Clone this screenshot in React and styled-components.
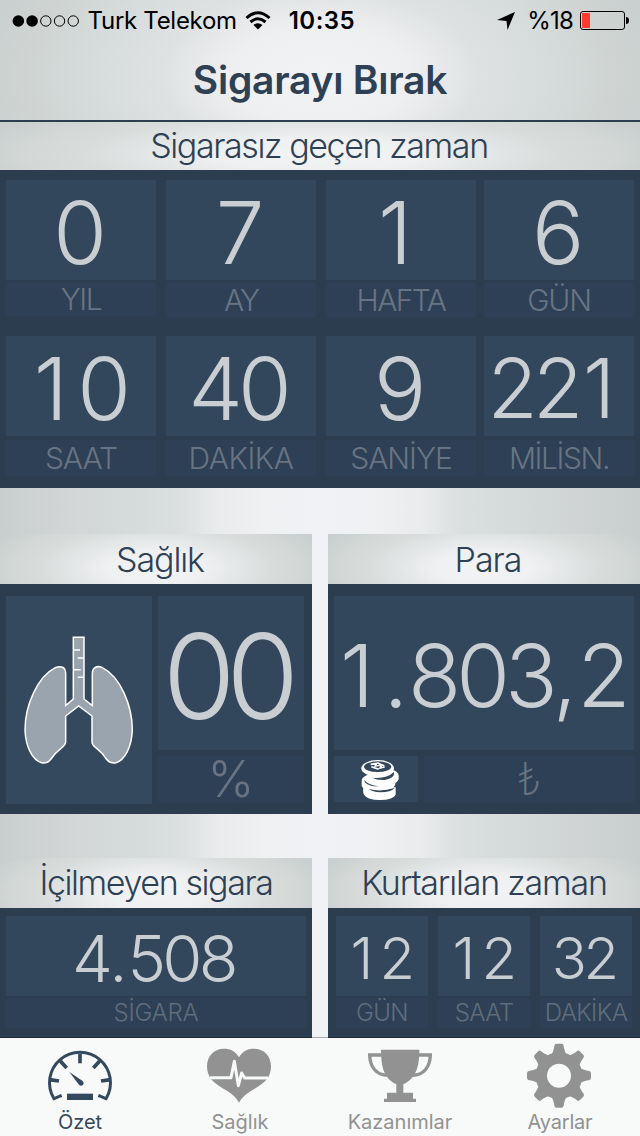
import React from "react";
import styled, { createGlobalStyle, css } from "styled-components";

const GlobalStyle = createGlobalStyle`
  * {
    box-sizing: border-box;
  }
  body {
    margin: 0;
    font-family: Inter, "Liberation Sans", sans-serif;
  }
`;

const silver = css`
  background: radial-gradient(
    ellipse 56% 125% at 50% 68%,
    #f2f3f5 0%,
    #eff0f1 28%,
    #e3e6e6 48%,
    #d8dddc 66%,
    #d3d8d7 82%,
    #c9cfce 100%
  );
`;

const Screen = styled.div`
  width: 640px;
  height: 1136px;
  display: flex;
  flex-direction: column;
  overflow: hidden;
  background: linear-gradient(
    90deg,
    #c9cfce 0%,
    #cfd3d3 7%,
    #d3d7d7 13%,
    #d6dcdb 22%,
    #dbdfdf 28%,
    #e9ebec 34%,
    #eff0f2 41%,
    #f1f2f5 50%,
    #eff0f2 59%,
    #e9ebec 66%,
    #dbdfdf 72%,
    #d6dcdb 78%,
    #cfd3d3 91%,
    #c9cfce 100%
  );
`;
const Header = styled.header`
  height: 122px;
  border-bottom: 2px solid #2c3e50;
  background: radial-gradient(
    ellipse 350px 190px at 50% 76px,
    #f2f3f5 0%,
    #eeeff1 26%,
    #dfe2e3 45%,
    #d6dbdb 65%,
    #cfd4d3 84%,
    #c9cfce 100%
  );
`;
const StatusBar = styled.div`
  height: 41px;
  display: flex;
  align-items: center;
  padding: 0 10px 0 12px;
  color: #000;
`;
const StatusText = styled.span`
  font-size: 24px;
  line-height: 41px;
  font-weight: ${(p) => p.$weight || 400};
  letter-spacing: ${(p) => p.$track}px;
  margin-left: ${(p) => p.$gap}px;
  white-space: nowrap;
`;
const Title = styled.h1`
  margin: 0;
  font-size: 39px;
  font-weight: 560;
  line-height: 77px;
  letter-spacing: -0.25px;
  text-align: center;
  color: #2e4054;
`;
const Heading = styled.h2`
  ${silver}
  margin: 0;
  height: ${(p) => p.$height || 50}px;
  padding: ${(p) => p.$pad || 0};
  font-size: 34px;
  font-weight: 300;
  line-height: ${(p) => p.$height || 50}px;
  letter-spacing: ${(p) => p.$track}px;
  text-align: center;
  white-space: nowrap;
  color: #2e4054;
`;
const TimePanel = styled.section`
  height: 318px;
  padding: 10px 6px 12px;
  display: grid;
  grid-template-columns: 150px 150px 150px 150px;
  column-gap: 10px;
  grid-template-rows: 156px 140px;
  background: #2c3d50;
  & > :nth-child(4n) {
    margin-left: -2px;
    margin-right: 2px;
  }
`;
const Unit = styled.div`
  display: flex;
  flex-direction: column;
`;
const FigureBox = styled.div`
  height: ${(p) => p.$height}px;
  padding-top: ${(p) => p.$drop || 5}px;
  text-align: center;
  background: #32475b;
  color: #c9ced3;
  line-height: ${(p) => p.$height - (p.$drop || 5)}px;
`;
const FigureText = styled.span`
  margin-right: 0.08em;
  font-size: ${(p) => p.$size}px;
  font-weight: 280;
  letter-spacing: ${(p) => p.$track || -0.058}em;
  white-space: nowrap;
`;
// the numeral one is much narrower than the other digits, so it gets side room
const One = styled.span`
  margin-left: 0.052em;
  margin-right: 0.165em;
`;
const Sep = styled.span`
  letter-spacing: 0;
`;
const Caption = styled.div`
  height: ${(p) => p.$height || 36}px;
  margin-top: ${(p) => p.$gap}px;
  background: #2e4055;
  color: ${(p) => (p.$dim ? "#5f6d7c" : "#687483")};
  font-size: ${(p) => p.$size || 30}px;
  font-weight: ${(p) => p.$weight || 300};
  line-height: ${(p) => p.$height || 36}px;
  letter-spacing: ${(p) => p.$track || 0}px;
  text-align: center;
  white-space: nowrap;
`;
const Cards = styled.div`
  display: grid;
  grid-template-columns: 312px 312px;
  column-gap: 16px;
  margin-top: ${(p) => p.$top}px;
`;
const CardBody = styled.div`
  height: ${(p) => p.$height}px;
  padding: ${(p) => p.$pad};
  display: flex;
  gap: ${(p) => p.$gap || 0}px;
  flex-direction: ${(p) => (p.$column ? "column" : "row")};
  background: #2c3d50;
  & > div {
    flex: none;
  }
`;
const LungTile = styled.div`
  width: 146px;
  height: 208px;
  padding: 29px 0 0 9px;
  background: #34495e;
`;
const Column = styled.div`
  width: ${(p) => p.$width}px;
`;
const MoneyRow = styled.div`
  display: grid;
  grid-template-columns: 84px 210px;
  column-gap: 6px;
`;
const CoinTile = styled.div`
  height: 46px;
  padding-left: 16px;
  background: #32475b;
  svg {
    display: block;
    margin-top: -6px;
  }
`;
const TabBar = styled.nav`
  height: 99px;
  flex: none;
  margin-top: -1px;
  display: grid;
  grid-template-columns: repeat(4, 160px);
  border-top: 1px solid rgba(0, 0, 0, 0.3);
  background: #f8f9f9 padding-box;
  z-index: 1;
`;
const Tab = styled.a`
  display: flex;
  flex-direction: column;
  align-items: center;
  padding-top: 2px;
  color: ${(p) => (p.$active ? "#34495e" : "#929292")};
`;
const TabLabel = styled.span`
  font-size: 20px;
  line-height: 24px;
  letter-spacing: ${(p) => p.$track || 0}px;
`;
const TabIcon = styled.svg.attrs({ width: 80, height: 70 })`
  display: block;
`;
const StatusIcon = styled.svg`
  flex: none;
  margin-left: ${(p) => p.$gap}px;
`;

const Figure = ({ height, size, drop, track, children }) => (
  <FigureBox $height={height} $drop={drop}>
    <FigureText $size={size} $track={track}>
      {children.split(/([1.,])/).map((part, i) => {
        if (part === "1") return <One key={i}>1</One>;
        if (part === "." || part === ",") return <Sep key={i}>{part}</Sep>;
        return part;
      })}
    </FigureText>
  </FigureBox>
);

const Signal = () => (
  <svg width="70" height="14" viewBox="0 0 70 14">
    <circle cx="6.500" cy="7" r="5.900" />
    <circle cx="20.500" cy="7" r="5.900" />
    {[34.5, 48.5, 62.5].map((x) => (
      <circle key={x} cx={x} cy="7" r="5.300" fill="none" stroke="#000" />
    ))}
  </svg>
);

const Lungs = () => (
  <svg width="130" height="150" viewBox="0 0 390 450">
    <path
      d="M175 37H207V222L232 242V146C232 126 248 121 262 128C315 155 352 240 352 315C350 365 330 405 303 413C288 416 281 412 274 402C264 386 258 380 245 370C233 362 231 356 231 350V273L191 243L152 273V350C152 358 148 362 138 370C125 380 118 386 108 402C101 412 94 416 80 413C52 405 32 365 30 315C30 240 68 155 121 128C137 121 152 126 152 146V242L175 222Z"
      fill="#9aa4ae"
      stroke="#fff"
      strokeWidth="4.500"
    />
    <path
      d="M175 75H195M207 99H188M175 134H197M207 157H188"
      stroke="#fff"
      strokeWidth="4.500"
    />
  </svg>
);

const Coins = () => (
  <svg width="70" height="60" viewBox="0 0 210 180">
    <g fill="#fff">
      <path d="M40 112Q38 128 42 134Q52 150 90 150Q128 150 137 134V112Z" />
      <path d="M35 95Q34 82 50 76L136 88Q142 124 90 125Q42 124 35 108Z" />
      <path d="M50 76Q54 102 98 106Q140 106 146 88V76Q143 62 126 60Z" />
      <ellipse cx="83" cy="55" rx="49" ry="25" />
    </g>
    <g fill="#32475b">
      <path d="M56 117Q92 127 134 114Q122 127 92 127Q66 126 56 117Z" />
      <path d="M42 89Q52 104 88 109Q58 110 46 98Z" />
      <path d="M66 83Q108 88 132 66Q136 84 104 90Q82 91 66 83Z" />
      <ellipse cx="83" cy="50" rx="41" ry="16" />
    </g>
    <path
      d="M62 43L80 40L76 48L96 45L90 54L104 51M64 50L86 58M82 38L103 49"
      fill="none"
      stroke="#fff"
      strokeWidth="5"
    />
  </svg>
);

const GaugeIcon = () => (
  <TabIcon viewBox="0 0 240 210">
    <g fill="none" stroke="currentColor" strokeWidth="9">
      <path d="M65 166L42 176A91.500 91.500 0 1 1 198 176L175 166" />
      <path
        d="M120 41V70M61 63L80 84M179 63L160 84M28 119L57 123M212 119L183 123"
        strokeWidth="11"
      />
    </g>
    <path d="M81 161H159V180H81Z" fill="currentColor" />
    <path
      d="M88 96L128 123Q134 129 129 135Q122 140 117 134Z"
      fill="currentColor"
    />
  </TabIcon>
);

const HeartIcon = () => (
  <TabIcon viewBox="0 0 240 210">
    <path
      d="M117 52C107 33 91 26 72 26C40 26 21 50 21 79C21 111 39 127 63 142C91 158 108 170 117 188C126 170 143 158 171 142C196 127 213 111 213 79C213 50 194 26 162 26C143 26 127 33 117 52Z"
      fill="currentColor"
    />
    <path
      d="M30 113H93L103 64L115 137L125 99L134 114H204"
      fill="none"
      stroke="#f8f9f9"
      strokeWidth="9"
      strokeLinejoin="round"
    />
  </TabIcon>
);

const TrophyIcon = () => (
  <TabIcon viewBox="120 690 240 210">
    <path
      d="M183 719H298C298 772 288 804 250 823V848H279V866H288V876H192V866H201V848H229V823C192 804 183 772 183 719Z"
      fill="currentColor"
    />
    <path
      d="M186 735H149C150 770 168 796 204 796M295 735H331C330 770 312 796 277 796"
      fill="none"
      stroke="currentColor"
      strokeWidth="10"
    />
  </TabIcon>
);

const GearIcon = () => (
  <TabIcon viewBox="600 690 240 210">
    <g fill="currentColor">
      {[0, 45, 90, 135, 180, 225, 270, 315].map((angle) => (
        <path
          key={angle}
          transform={`rotate(${angle} 717 797)`}
          d="M692 740Q702 720 703 707Q704 701 710 701H724Q730 701 731 707Q732 720 742 740Z"
        />
      ))}
    </g>
    <circle
      cx="717"
      cy="797"
      r="53"
      fill="none"
      stroke="currentColor"
      strokeWidth="34"
    />
  </TabIcon>
);

const elapsed = [
  { value: "0", label: "YIL", track: -1.4, short: true },
  { value: "7", label: "AY", track: -2 },
  { value: "1", label: "HAFTA", track: -1.6 },
  { value: "6", label: "GÜN", track: -1.2 },
  { value: "10", label: "SAAT", track: -1.1 },
  { value: "40", label: "DAKİKA", track: -0.5 },
  { value: "9", label: "SANİYE", track: -1 },
  { value: "221", label: "MİLİSN.", track: -1.4, size: 82 },
];

const saved = [
  { value: "12", label: "GÜN" },
  { value: "12", label: "SAAT" },
  { value: "32", label: "DAKİKA" },
];

const tabs = [
  { label: "Özet", Icon: GaugeIcon, active: true },
  { label: "Sağlık", Icon: HeartIcon },
  { label: "Kazanımlar", Icon: TrophyIcon },
  { label: "Ayarlar", Icon: GearIcon, track: -0.2 },
];

const App = () => {
  return (
    <Screen>
      <GlobalStyle />
      <Header>
        <StatusBar>
          <Signal />
          <StatusText $track={-0.3} $gap={7}>
            Turk Telekom
          </StatusText>
          <StatusIcon $gap={8} width="26" height="20" viewBox="0 0 26 20">
            <g fill="none" stroke="#000" strokeWidth="3">
              <path d="M1.500 7Q13 -3.500 24.500 7" />
              <path d="M5.500 11Q13 4.500 20.500 11" />
            </g>
            <path d="M8.500 14Q13 10.500 17.500 14L13 18.500Z" />
          </StatusIcon>
          <StatusText $weight={600} $track={0.5} $gap={18}>
            10:35
          </StatusText>
          <StatusIcon $gap={142} width="19" height="18" viewBox="0 0 19 18">
            <path d="M18 0L10.500 18L9.500 9L0 8Z" />
          </StatusIcon>
          <StatusText $track={-0.8} $gap={11}>
            %18
          </StatusText>
          <StatusIcon $gap={7} width="50" height="19" viewBox="0 0 50 19">
            <rect
              x="0.500"
              y="0.500"
              width="44"
              height="18"
              rx="2.500"
              fill="none"
              stroke="#000"
            />
            <rect x="2" y="2" width="8" height="15" fill="#ff3b30" />
            <path d="M46 6Q49 6 49 9.500Q49 13 46 13Z" />
          </StatusIcon>
        </StatusBar>
        <Title>Sigarayı Bırak</Title>
      </Header>

      <Heading $height={48} $track={-1.4} $pad="0 2px 0 0">
        Sigarasız geçen zaman
      </Heading>
      <TimePanel>
        {elapsed.map(({ value, label, track, size, short }, i) => (
          <Unit key={label}>
            <Figure height={100} size={size || 87}>
              {value}
            </Figure>
            <Caption
              $height={short ? 34 : 36}
              $gap={i < 4 ? 2 : 4}
              $track={track}
            >
              {label}
            </Caption>
          </Unit>
        ))}
      </TimePanel>

      <Cards $top={46}>
        <section>
          <Heading $track={-1.1} $pad="1px 0 0 8px">
            Sağlık
          </Heading>
          <CardBody $height={230} $pad="12px 6px" $gap={6}>
            <LungTile>
              <Lungs />
            </LungTile>
            <Column $width={146}>
              <Figure height={154} size={118} drop={7} track={-0.08}>
                00
              </Figure>
              <Caption $height={46} $gap={6} $size={50}>
                %
              </Caption>
            </Column>
          </CardBody>
        </section>
        <section>
          <Heading $track={-1} $pad="1px 0 0 8px">
            Para
          </Heading>
          <CardBody $height={230} $pad="12px 6px" $gap={6} $column>
            <Figure height={154} size={87} drop={6}>
              1.803,2
            </Figure>
            <MoneyRow>
              <CoinTile>
                <Coins />
              </CoinTile>
              <Caption $height={46} $gap={0} $size={45} $weight={250}>
                ₺
              </Caption>
            </MoneyRow>
          </CardBody>
        </section>
      </Cards>

      <Cards $top={44}>
        <section>
          <Heading $track={-1.4}>İçilmeyen sigara</Heading>
          <CardBody $height={130} $pad="8px 6px 0">
            <Column $width={300}>
              <Figure height={80} size={65}>
                4.508
              </Figure>
              <Caption $height={30} $gap={2} $size={24} $track={-0.2} $dim>
                SİGARA
              </Caption>
            </Column>
          </CardBody>
        </section>
        <section>
          <Heading $track={-1.2}>Kurtarılan zaman</Heading>
          <CardBody $height={130} $pad="8px 8px 0" $gap={10}>
            {saved.map(({ value, label }) => (
              <Column key={value + label} $width={92}>
                <Figure height={80} size={58} drop={4}>
                  {value}
                </Figure>
                <Caption $height={30} $gap={2} $size={24} $track={-0.6} $dim>
                  {label}
                </Caption>
              </Column>
            ))}
          </CardBody>
        </section>
      </Cards>

      <TabBar>
        {tabs.map(({ label, Icon, active, track }) => (
          <Tab key={label} $active={active}>
            <Icon />
            <TabLabel $track={track}>{label}</TabLabel>
          </Tab>
        ))}
      </TabBar>
    </Screen>
  );
};

export default App;
